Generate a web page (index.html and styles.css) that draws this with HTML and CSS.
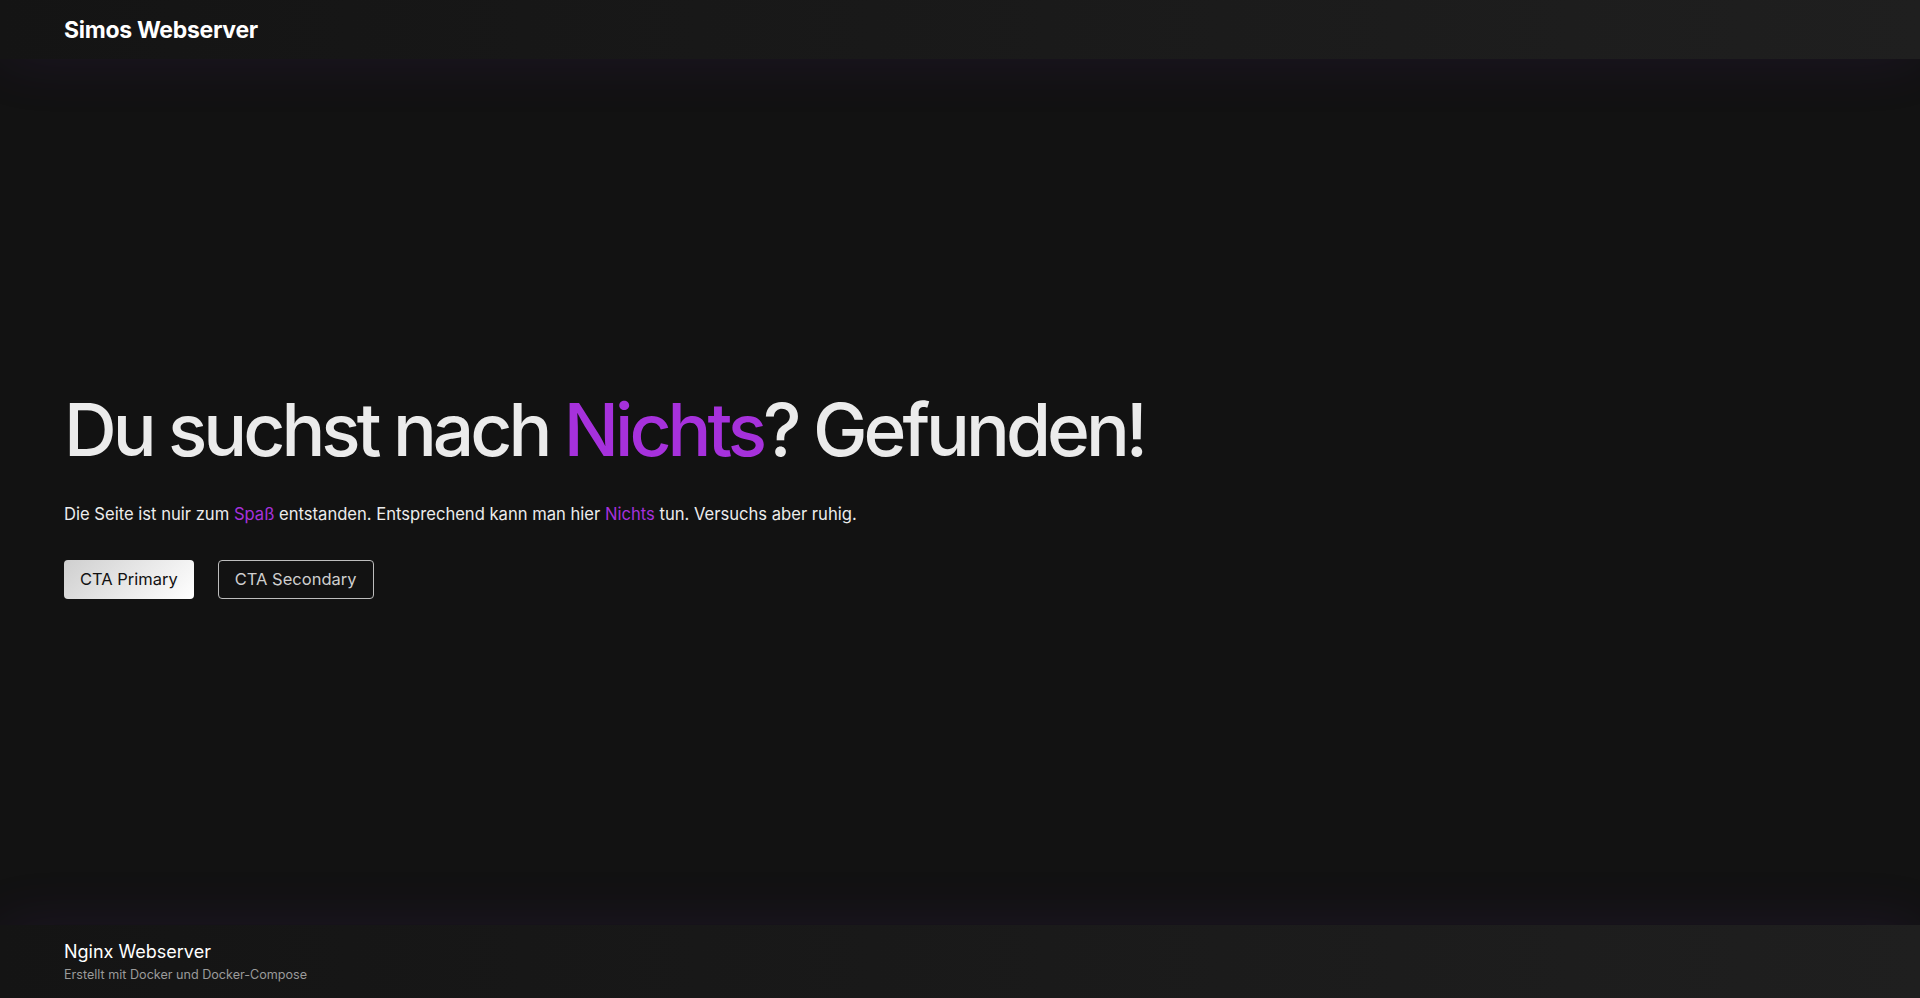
FILE: index.html
```html
<!DOCTYPE html>
<html lang="de">
<head>
<meta charset="utf-8">
<title>Simos Webserver</title>
<link rel="stylesheet" href="styles.css">
</head>
<body>
<div class="page">
  <header class="site-header">
    <div class="brand">Simos Webserver</div>
  </header>
  <main class="hero">
    <div class="hero-inner">
      <h1 class="hero-title">Du suchst nach <span class="accent">Nichts</span>? Gefunden!</h1>
      <p class="hero-text">Die Seite ist nuir zum <span class="accent">Spaß</span> entstanden. Entsprechend kann man hier <span class="accent">Nichts</span> tun. Versuchs aber ruhig.</p>
      <div class="actions">
        <button class="btn btn-primary">CTA Primary</button>
        <button class="btn btn-secondary">CTA Secondary</button>
      </div>
    </div>
  </main>
  <footer class="site-footer">
    <div class="footer-title">Nginx Webserver</div>
    <div class="footer-sub">Erstellt mit Docker und Docker-Compose</div>
  </footer>
</div>
</body>
</html>
```

FILE: styles.css
```css
* { box-sizing: border-box; }
html, body { margin: 0; padding: 0; height: 100%; }
body {
  background: #121212;
  color: #ebebeb;
  font-family: Inter, "Noto Sans", sans-serif;
}
.page {
  display: flex;
  flex-direction: column;
  height: 998px;
}
.site-header {
  height: 59px;
  flex: none;
  display: flex;
  align-items: center;
  padding: 0 64px;
  background: linear-gradient(90deg, #141414 0%, #1f1f1f 100%);
  box-shadow: 0 0 60px rgba(110, 40, 170, 0.12);
  position: relative;
  z-index: 1;
}
.brand {
  font-size: 23px;
  font-weight: 700;
  color: #ffffff;
  letter-spacing: -0.3px;
}
.hero {
  flex: 1;
  display: flex;
  align-items: center;
  padding: 4px 64px 0;
  background: #121212;
}
.hero-title {
  margin: 0;
  font-size: 73px;
  font-weight: 500;
  line-height: 79px;
  letter-spacing: -4px;
  color: #ebebeb;
}
.accent { color: #a631dc; }
.hero-text {
  margin: 33px 0 0;
  font-size: 16.6px;
  line-height: 25px;
  color: #ececec;
}
.actions {
  display: flex;
  gap: 24px;
  margin-top: 33px;
}
.btn {
  font-family: inherit;
  font-size: 16.5px;
  height: 39px;
  padding: 0 16px;
  border-radius: 4px;
  cursor: pointer;
}
.btn-primary {
  background: linear-gradient(135deg, #cfcfcf 0%, #ffffff 100%);
  border: none;
  color: #111111;
}
.btn-secondary {
  background: transparent;
  border: 1px solid #bdbdbd;
  color: #cfcfcf;
}
.site-footer {
  height: 73px;
  flex: none;
  padding: 16px 64px 0;
  background: linear-gradient(90deg, #141414 0%, #1f1f1f 100%);
  box-shadow: 0 0 60px rgba(110, 40, 170, 0.12);
  position: relative;
  z-index: 1;
}
.footer-title {
  font-size: 18px;
  color: #ffffff;
  line-height: 1.25;
}
.footer-sub {
  font-size: 12.6px;
  color: #9a9a9a;
  margin-top: 3px;
}
```
